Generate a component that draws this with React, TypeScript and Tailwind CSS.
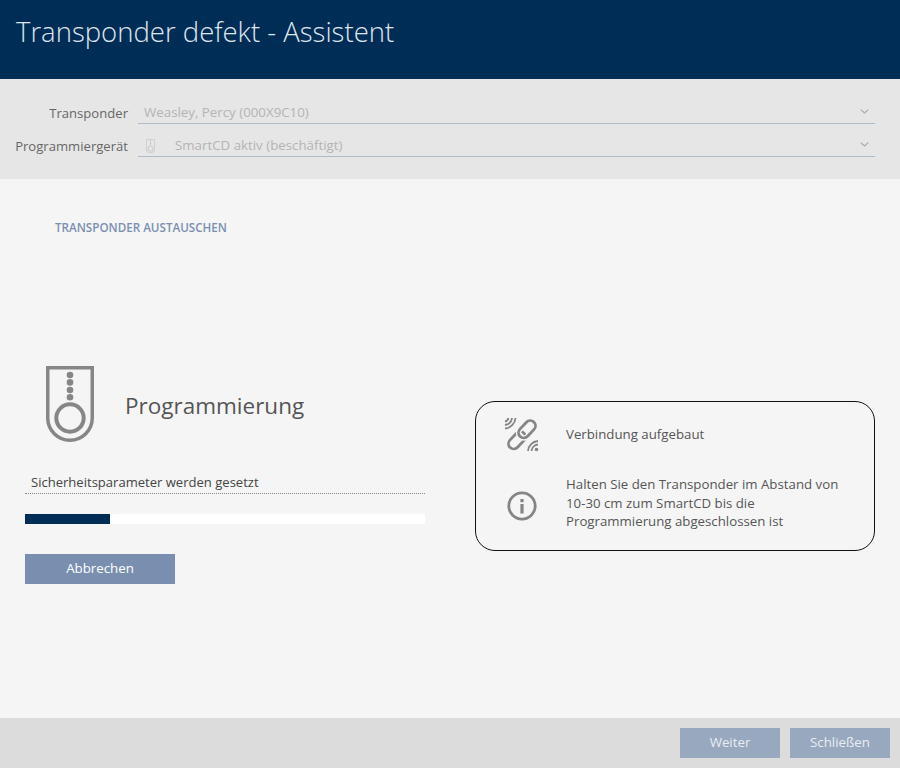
const font = { fontFamily: "'Open Sans', 'Noto Sans', sans-serif" };

function TransponderIcon({ className }: { className?: string }) {
  return (
    <svg viewBox="0 0 48 76" className={className} fill="none">
      <path d="M1.75 1.75H46.25V52A22.25 22.25 0 0 1 1.75 52Z" stroke="currentColor" strokeWidth="3.5" />
      <circle cx="24" cy="52" r="13.7" stroke="currentColor" strokeWidth="4" />
      <circle cx="24" cy="9" r="3.3" fill="currentColor" />
      <circle cx="24" cy="16.4" r="3.3" fill="currentColor" />
      <circle cx="24" cy="24" r="3.3" fill="currentColor" />
      <circle cx="24" cy="31.3" r="3.3" fill="currentColor" />
    </svg>
  );
}

function LinkIcon() {
  return (
    <svg viewBox="0 0 36 36" className="w-9 h-9 text-[#858585]" fill="none" stroke="currentColor">
      {/* chain */}
      <rect x="3" y="18" width="20" height="10.5" rx="5.25" transform="rotate(-47 13 23.25)" strokeWidth="2.8" />
      <rect x="13" y="7" width="20" height="10.5" rx="5.25" transform="rotate(-47 23 12.25)" stroke="#f5f5f5" strokeWidth="5.5" />
      <rect x="13" y="7" width="20" height="10.5" rx="5.25" transform="rotate(-47 23 12.25)" strokeWidth="2.8" />
      {/* signal */}
      <g strokeWidth="1.8">
        <path d="M1 4.5C2.8 4.2 4 3 4.4 1" />
        <path d="M1 8C4.8 7.5 7.5 4.8 8 1" />
        <path d="M1 11.5C6.8 11 11 6.8 11.5 1" />
        <path d="M34 27.5C30.5 27.8 27.8 30.5 27.5 34" />
        <path d="M34 24C28.5 24.5 24.5 28.5 24 34" />
      </g>
      <circle cx="32.5" cy="32.5" r="1.8" fill="currentColor" stroke="none" />
    </svg>
  );
}

function InfoIcon() {
  return (
    <svg viewBox="0 0 30 30" className="w-[30px] h-[30px] text-[#858585]" fill="none">
      <circle cx="15" cy="15" r="13.2" stroke="currentColor" strokeWidth="2.8" />
      <rect x="13.4" y="13" width="3.2" height="9.5" fill="currentColor" />
      <rect x="13.4" y="8" width="3.2" height="3.2" fill="currentColor" />
    </svg>
  );
}

function Chevron() {
  return (
    <svg viewBox="0 0 10 6" className="w-[9px] h-[5px] text-[#a8a8a8]" fill="none">
      <path d="M0.5 0.8L5 4.8L9.5 0.8" stroke="currentColor" strokeWidth="1.3" />
    </svg>
  );
}

function SelectRow({ label, children }: { label: string; children: React.ReactNode }) {
  return (
    <div className="flex items-end h-[33px]">
      <div className="w-[128px] text-right text-[13.1px] leading-[20px] text-[#666] pb-[1px] shrink-0">{label}</div>
      <div className="ml-[10px] w-[737px] h-[24px] flex items-center justify-between border-b border-[#adbbcd] pr-[6px] text-[13.3px] text-[#b4b4b4]">
        {children}
        <Chevron />
      </div>
    </div>
  );
}

export default function App() {
  return (
    <div className="w-[900px] h-[768px] flex flex-col bg-[#f5f5f5] overflow-hidden" style={font}>
      <header className="h-[79px] bg-[#002d56] pl-[16px] pt-[12px]">
        <h1 className="text-[27.5px] leading-[40px] font-light text-[#dfe6ed]">Transponder defekt - Assistent</h1>
      </header>

      <div className="h-[100px] bg-[#e6e6e6] pt-[12px]">
        <SelectRow label="Transponder">
          <span className="pl-[6px] pt-[3px]">Weasley, Percy (000X9C10)</span>
        </SelectRow>
        <SelectRow label="Programmiergerät">
          <span className="flex items-center pl-[8px] pt-[2px]">
            <TransponderIcon className="w-[9px] h-[14px] text-[#c0c0c0]" />
            <span className="ml-[20px]">SmartCD aktiv (beschäftigt)</span>
          </span>
        </SelectRow>
      </div>

      <main className="flex-1 flex flex-col">
        <div className="pl-[55px] pt-[41px] text-[11.65px] leading-[16px] font-semibold text-[#7a8fb0]">
          TRANSPONDER AUSTAUSCHEN
        </div>
        <div className="flex pl-[25px] pt-[128px]">
          <div className="w-[400px] shrink-0">
            <div className="flex items-center pl-[21px] h-[80px]">
              <TransponderIcon className="w-[48px] h-[76px] text-[#868686]" />
              <span className="ml-[31px] pt-[4px] text-[22.5px] text-[#555]">Programmierung</span>
            </div>
            <div className="mt-[26px] h-[24px] pl-[6px] border-b border-dotted border-[#888] text-[13.05px] leading-[24px] text-[#444]">
              Sicherheitsparameter werden gesetzt
            </div>
            <div className="mt-[20px] h-[10px] bg-white">
              <div className="w-[85px] h-full bg-[#002d56]" />
            </div>
            <button className="mt-[30px] w-[150px] h-[30px] bg-[#7a8fb0] text-white text-[13.3px]">Abbrechen</button>
          </div>
          <div className="ml-[50px] mt-[37px] w-[400px] h-[150px] rounded-[20px] border border-[#111] pl-[28px] flex flex-col">
            <div className="flex items-center h-[65px]">
              <div className="w-[36px] flex justify-center"><LinkIcon /></div>
              <span className="ml-[26px] pt-[1px] text-[13.25px] text-[#555]">Verbindung aufgebaut</span>
            </div>
            <div className="flex items-center pt-[8px]">
              <div className="w-[36px] flex justify-center pt-[7px]"><InfoIcon /></div>
              <p className="ml-[26px] w-[290px] text-[13.25px] leading-[18.6px] text-[#555]">
                Halten Sie den Transponder im Abstand von 10-30 cm zum SmartCD bis die Programmierung abgeschlossen ist
              </p>
            </div>
          </div>
        </div>
      </main>

      <footer className="h-[50px] bg-[#dcdcdc] flex justify-end items-start pt-[10px] pr-[10px] gap-[10px]">
        <button className="w-[100px] h-[30px] bg-[#98a8be] text-[#e8edf3] text-[13.3px]">Weiter</button>
        <button className="w-[100px] h-[30px] bg-[#98a8be] text-[#e8edf3] text-[13.3px]">Schließen</button>
      </footer>
    </div>
  );
}
